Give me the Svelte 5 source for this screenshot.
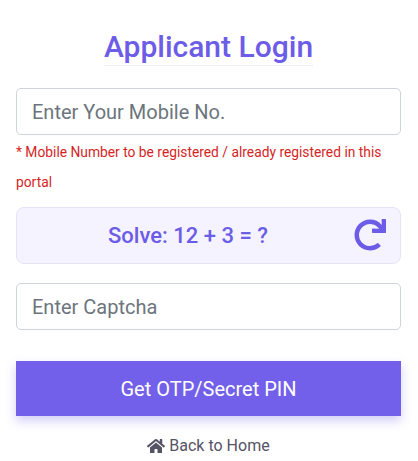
<script>
  let mobile = $state('');
  let captcha = $state('');
</script>

<div class="page">
  <div class="heading"><h2>Applicant Login</h2></div>
  <input class="field first" type="text" placeholder="Enter Your Mobile No." bind:value={mobile} />
  <p class="note">* Mobile Number to be registered / already registered in this portal</p>
  <div class="captcha">
    <span class="sum">Solve: 12 + 3 = ?</span>
    <button class="refresh" type="button" aria-label="Refresh">
      <svg viewBox="0 0 512 512" width="32" height="32"><path fill="currentColor" d="M500.33 0h-47.41a12 12 0 0 0-12 12.57l4 82.76A247.42 247.42 0 0 0 256 8C119.34 8 8.9 119.53 8 256.19 7.1 393.07 117.91 504 256 504a247.1 247.1 0 0 0 166.18-63.91 12 12 0 0 0 .48-17.43l-34-34a12 12 0 0 0-16.38-.55A176 176 0 1 1 402.1 157.8l-101.53-4.87a12 12 0 0 0-12.57 12v47.41a12 12 0 0 0 12 12h200.33a12 12 0 0 0 12-12V12a12 12 0 0 0-12-12z"/></svg>
    </button>
  </div>
  <input class="field second" type="text" placeholder="Enter Captcha" bind:value={captcha} />
  <button class="submit" type="button">Get OTP/Secret PIN</button>
  <a class="back" href="#home">
    <svg viewBox="0 0 576 512" width="18" height="16"><path fill="currentColor" d="M280.37 148.26L96 300.11V464a16 16 0 0 0 16 16l112.06-.29a16 16 0 0 0 15.92-16V368a16 16 0 0 1 16-16h64a16 16 0 0 1 16 16v95.64a16 16 0 0 0 16 16.05L464 480a16 16 0 0 0 16-16V300L295.67 148.26a12.19 12.19 0 0 0-15.3 0zM571.6 251.47L488 182.56V44.05a12 12 0 0 0-12-12h-56a12 12 0 0 0-12 12v72.61L318.47 43a48 48 0 0 0-61 0L4.34 251.47a12 12 0 0 0-1.6 16.9l25.5 31A12 12 0 0 0 45.15 301l235.22-193.74a12.19 12.19 0 0 1 15.3 0L530.9 301a12 12 0 0 0 16.9-1.6l25.5-31a12 12 0 0 0-1.7-16.93z"/></svg>
    Back to Home
  </a>
</div>

<style>
  :global(body) {
    margin: 0;
    background: #fff;
    font-family: Roboto, "Liberation Sans", sans-serif;
  }
  .page {
    box-sizing: border-box;
    width: 418px;
    height: 461px;
    padding: 29px 17px 0 16px;
    display: flex;
    flex-direction: column;
    overflow: hidden;
  }
  .heading {
    display: flex;
    justify-content: center;
  }
  h2 {
    margin: 0;
    font-size: 30px;
    line-height: 36px;
    font-weight: 500;
    color: #6c5ce7;
    border-bottom: 1px solid #eeeeee;
  }
  .field {
    box-sizing: border-box;
    width: 100%;
    height: 47px;
    border: 1px solid #ced4da;
    border-radius: 5px;
    background: #fff;
    font-family: inherit;
    font-size: 20px;
    padding: 0 15px;
    color: #495057;
    outline: none;
  }
  .field::placeholder {
    color: #6c757d;
    opacity: 1;
  }
  .first {
    margin-top: 22px;
  }
  .second {
    margin-top: 19px;
  }
  .note {
    margin: 0;
    padding-top: 2px;
    font-size: 13.8px;
    line-height: 30px;
    color: #d61f26;
  }
  .captcha {
    margin-top: 10px;
    box-sizing: border-box;
    height: 57px;
    border: 1px solid #e6e3f5;
    border-radius: 8px;
    background: #f5f3ff;
    color: #6c5ce7;
    display: flex;
    align-items: center;
    padding: 0 14px 0 5px;
  }
  .sum {
    flex: 1;
    text-align: center;
    font-size: 22px;
    font-weight: 500;
  }
  .refresh {
    margin-top: -1px;
    padding: 0;
    border: 0;
    background: none;
    color: inherit;
    display: flex;
  }
  .submit {
    margin-top: 31px;
    height: 55px;
    border: 0;
    background: #7360ea;
    color: #fff;
    font-family: inherit;
    font-size: 20px;
    box-shadow: 0 5px 10px rgba(108, 92, 231, 0.3);
  }
  .back {
    margin-top: 20px;
    align-self: center;
    display: flex;
    align-items: center;
    gap: 4px;
    color: #555366;
    font-size: 16px;
    line-height: 20px;
    text-decoration: none;
  }
</style>
